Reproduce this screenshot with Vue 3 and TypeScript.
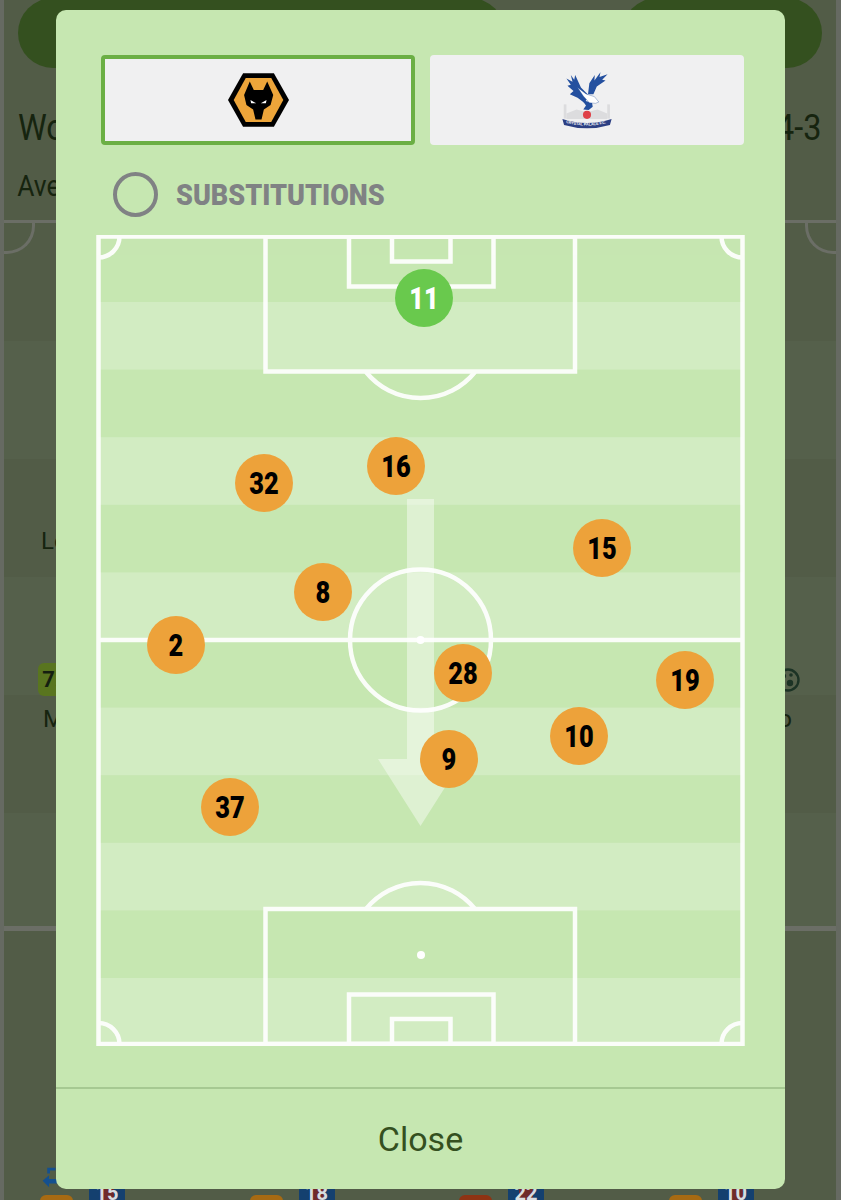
<script setup lang="ts">
interface Player { n: string; x: number; y: number; green?: boolean }
const players: Player[] = [
  { n: '11', x: 424, y: 298, green: true },
  { n: '16', x: 396, y: 466 },
  { n: '32', x: 264, y: 483 },
  { n: '15', x: 602, y: 548 },
  { n: '8', x: 323, y: 592 },
  { n: '2', x: 176, y: 645 },
  { n: '28', x: 463, y: 673 },
  { n: '19', x: 685, y: 680 },
  { n: '10', x: 579, y: 736 },
  { n: '9', x: 449, y: 759 },
  { n: '37', x: 230, y: 807 },
]
const stripes = Array.from({ length: 6 }, (_, i) => 302 + i * 135.2)
const bottomItems = [
  { n: '15', tone: 'amber' },
  { n: '18', tone: 'amber' },
  { n: '22', tone: 'red' },
  { n: '10', tone: 'amber' },
]
</script>

<template>
  <div class="page">
    <div class="backdrop">
      <div class="top-pills">
        <div class="pill pill-a"></div>
        <div class="pill pill-b"></div>
      </div>
      <div class="title-row">
        <span>Wolves</span>
        <span>4-3</span>
      </div>
      <div class="avg-row">Average</div>
      <div class="bg-pitch">
        <div class="bg-corner bg-corner-l"></div>
        <div class="bg-corner bg-corner-r"></div>
        <div class="bg-name">Lemina</div>
        <div class="bg-row">
          <div class="bg-chip">7.1</div>
          <svg class="bg-ball" viewBox="0 0 24 24" width="24" height="24">
            <circle cx="12" cy="12" r="10.5" fill="none" stroke="#1c3325" stroke-width="2.4" />
            <circle cx="8" cy="8" r="2.2" fill="#1c3325" />
            <circle cx="15" cy="7" r="1.8" fill="#1c3325" />
            <circle cx="14" cy="15" r="3.2" fill="#1c3325" />
            <circle cx="6" cy="15" r="1.8" fill="#1c3325" />
          </svg>
        </div>
        <div class="bg-row bg-row-names">
          <span>Moutinho</span>
          <span>o</span>
        </div>
      </div>
      <div class="bg-bottom">
        <div v-for="(b, i) in bottomItems" :key="b.n" class="bg-player">
          <svg v-if="i === 0" class="bg-sub" viewBox="0 0 16 26" width="16" height="24">
            <path d="M5 2h9v3H8v3H5z" fill="#14508f" />
            <path d="M0 16l7-6v4h9v5H7v4z" fill="#14508f" />
          </svg>
          <div class="bg-chip-low" :class="b.tone"></div>
          <div class="bg-crest"><span>{{ b.n }}</span></div>
        </div>
      </div>
    </div>

    <div class="modal">
      <div class="tabs">
        <button class="tab tab-active" type="button">
          <svg viewBox="55 70 182 160" width="61" height="54">
            <polygon points="55,150 100,70 192,70 237,150 192,230 100,230" fill="#000" />
            <polygon points="72,150 108,84 184,84 220,150 184,216 108,216" fill="#eda53a" />
            <path d="M120 95l12 25h28l12-25 18 40-8 30-20 13-7 30h-18l-7-30-20-13-7-30z" fill="#000" />
            <path d="M122 150l17 10h-15zM170 150l-17 10h15z" fill="#fff" />
          </svg>
        </button>
        <button class="tab" type="button">
          <svg viewBox="66 56 154 172" width="52" height="58">
            <g fill="#dcdcde">
              <rect x="74" y="155" width="8" height="42" />
              <rect x="203" y="155" width="8" height="42" />
              <path d="M82 182l30-12 31 8 31-8 29 12v16H82z" />
            </g>
            <g fill="#24509f">
              <path d="M108 68l17 37 25 25-15 20-20-15-23-10 11-10-18-15 10-3-13-19 18 10-5-20 10 14z" />
              <path d="M146 125l4-33 16-24-1 16 18-24-3 14 24-8-16 16 10 2-26 18-10 23z" />
              <path d="M128 142l30 8 2 12-12 10-16-2 8-12z" />
            </g>
            <path d="M115 105l25 19 25 8 13 16-10 4-18-2-18-20z" fill="#fff" stroke="#24509f" stroke-width="1" />
            <circle cx="143" cy="186" r="12" fill="#df4148" />
            <path d="M70 198q73 24 146 0l-5 18q-68 20-136 0z" fill="#2c3f83" />
            <path id="banner-line" d="M75 208q68 20 136 0" fill="none" />
            <text class="crest-text"><textPath href="#banner-line" startOffset="6">CRYSTAL PALACE F.C.</textPath></text>
          </svg>
        </button>
      </div>

      <div class="subs">
        <span class="radio"></span>
        <span class="subs-label">SUBSTITUTIONS</span>
      </div>

      <div class="pitch">
        <svg class="pitch-lines" viewBox="96 235 649 811" width="649" height="811">
          <rect v-for="y in stripes" :key="y" x="98" :y="y" width="645" height="67.6" fill="#d2ecc2" />
          <g fill="none" stroke="#fff" stroke-width="4.5" opacity="0.92">
            <rect x="98.5" y="236.5" width="644" height="807.5" />
            <line x1="98.5" y1="640" x2="742.5" y2="640" />
            <circle cx="420.5" cy="640" r="70.5" />
            <rect x="265.5" y="236.5" width="309.5" height="135" />
            <rect x="349" y="236.5" width="144.5" height="50" />
            <rect x="392" y="236.5" width="58.5" height="25" />
            <path d="M366 372a70 70 0 0 0 109 0" />
            <rect x="265.5" y="909" width="309.5" height="135" />
            <rect x="349" y="994.5" width="144.5" height="49.5" />
            <rect x="392" y="1019" width="58.5" height="25" />
            <path d="M366 909a70 70 0 0 1 109 0" />
            <path d="M119.5 236.5a21 21 0 0 1-21 21" />
            <path d="M721.5 236.5a21 21 0 0 0 21 21" />
            <path d="M98.5 1023a21 21 0 0 1 21 21" />
            <path d="M742.5 1023a21 21 0 0 0-21 21" />
          </g>
          <circle cx="420.5" cy="640" r="4" fill="#fff" />
          <circle cx="421" cy="955" r="4" fill="#fff" />
          <path d="M407 499h27v260h29l-42.500 67-42.500-67h29z" fill="#fff" opacity="0.42" />
        </svg>
        <div
          v-for="p in players"
          :key="p.n"
          class="player"
          :class="{ 'player-green': p.green }"
          :style="{ left: p.x - 96 + 'px', top: p.y - 235 + 'px' }"
        >
          <span class="player-n">{{ p.n }}</span>
        </div>
      </div>

      <button class="close" type="button">Close</button>
    </div>
  </div>
</template>

<style>
html, body { margin: 0; padding: 0; background: #525c47; }
</style>

<style scoped>
.page {
  position: relative;
  width: 841px;
  height: 1200px;
  overflow: hidden;
  background: #666a62;
  font-family: Roboto, "Liberation Sans", sans-serif;
}
.backdrop {
  display: flex;
  flex-direction: column;
  height: 1200px;
  margin: 0 5px 0 4px;
  background: #525c47;
  color: #16240f;
}
.top-pills {
  display: flex;
  justify-content: space-between;
  height: 70px;
  margin: -2px 14px 0 14px;
  flex: none;
}
.pill { background: #34501f; border-radius: 35px; height: 70px; }
.pill-a { width: 487px; }
.pill-b { width: 200px; }
.title-row {
  display: flex;
  justify-content: space-between;
  padding: 37px 15px 0 14px;
  font-size: 36px;
  line-height: 46px;
  flex: none;
}
.title-row span { display: inline-block; transform: scaleX(0.9); transform-origin: left; }
.title-row span:last-child { transform-origin: right; }
.avg-row {
  padding: 17px 0 0 15px;
  font-size: 30px;
  line-height: 36px;
  flex: none;
  transform: scaleX(0.88);
  transform-origin: left;
}
.bg-pitch {
  position: relative;
  margin-top: 16px;
  height: 703px;
  flex: none;
  border-top: 3px solid #6b6e66;
  border-bottom: 5px solid #6b6e66;
  background: repeating-linear-gradient(#525c47 0 118px, #55604b 118px 236px);
  box-sizing: content-box;
}
.bg-corner {
  position: absolute;
  top: 0;
  width: 28px;
  height: 28px;
  border-bottom: 3px solid #6b6e66;
}
.bg-corner-l { left: 0; border-right: 3px solid #6b6e66; border-bottom-right-radius: 28px; }
.bg-corner-r { right: 0; border-left: 3px solid #6b6e66; border-bottom-left-radius: 28px; }
.bg-name {
  padding: 304px 0 0 37px;
  font-size: 24px;
  line-height: 28px;
}
.bg-row {
  display: flex;
  justify-content: space-between;
  align-items: center;
  padding: 108px 36px 0 34px;
}
.bg-chip {
  width: 40px;
  height: 33px;
  border-radius: 6px;
  background: #59751f;
  color: #151f10;
  font-size: 22px;
  font-weight: 700;
  line-height: 33px;
  text-align: center;
}
.bg-row-names {
  padding: 9px 44px 0 39px;
  font-size: 24px;
  line-height: 28px;
}
.bg-bottom {
  display: flex;
  margin-top: 235px;
  padding-left: 36px;
  flex: none;
}
.bg-player {
  position: relative;
  width: 209.500px;
  height: 40px;
  flex: none;
}
.bg-sub { position: absolute; left: 2px; top: 0; }
.bg-chip-low {
  position: absolute;
  left: 0;
  top: 29px;
  width: 33px;
  height: 20px;
  border-radius: 6px;
}
.amber { background: #a76a12; }
.red { background: #8f3313; }
.bg-crest {
  position: absolute;
  left: 49px;
  top: 17px;
  width: 36px;
  height: 24px;
  background: linear-gradient(90deg, #14406f 0 30%, #6f2a2a 30% 70%, #14406f 70%);
  color: #d8dde0;
  font-size: 20px;
  font-weight: 700;
  text-align: center;
  line-height: 20px;
}

.modal {
  position: absolute;
  left: 56px;
  top: 10px;
  width: 729px;
  height: 1179px;
  display: flex;
  flex-direction: column;
  border-radius: 10px;
  background: #c6e7b1;
  overflow: hidden;
}
.tabs {
  display: grid;
  grid-template-columns: 1fr 1fr;
  gap: 15px;
  margin: 45px 41px 0 45px;
  flex: none;
}
.tab {
  height: 90px;
  box-sizing: border-box;
  display: flex;
  align-items: center;
  justify-content: center;
  padding: 0;
  border: 0;
  border-radius: 4px;
  background: #f0f0f1;
}
.tab-active { border: 4px solid #6baf44; }
.crest-text {
  font-family: "Liberation Sans", sans-serif;
  font-size: 11px;
  font-weight: 700;
  fill: #fff;
}
.subs {
  display: flex;
  align-items: center;
  gap: 18px;
  margin: 27px 0 0 57px;
  height: 45px;
  flex: none;
}
.radio {
  box-sizing: border-box;
  width: 45px;
  height: 45px;
  border: 4px solid #808284;
  border-radius: 50%;
  flex: none;
}
.subs-label {
  display: inline-block;
  color: #808284;
  font-size: 30px;
  font-weight: 900;
  white-space: nowrap;
  transform: scaleX(0.9);
  transform-origin: left;
}
.pitch {
  position: relative;
  width: 649px;
  height: 811px;
  margin: 18px 0 0 40px;
  flex: none;
}
.pitch-lines { display: block; }
.player {
  position: absolute;
  width: 58px;
  height: 58px;
  margin: -29px 0 0 -29px;
  border-radius: 50%;
  background: #eda23a;
  color: #000;
  display: flex;
  align-items: center;
  justify-content: center;
}
.player-green { background: #69c94d; color: #fff; }
.player-n {
  display: inline-block;
  font-size: 31px;
  font-weight: 900;
  line-height: 1;
  transform: scaleX(0.82);
}
.close {
  margin-top: auto;
  height: 102px;
  flex: none;
  padding: 0;
  border: 0;
  border-top: 2px solid #a6c992;
  background: transparent;
  color: #34501f;
  font-family: Roboto, "Liberation Sans", sans-serif;
  font-size: 34px;
}
</style>
